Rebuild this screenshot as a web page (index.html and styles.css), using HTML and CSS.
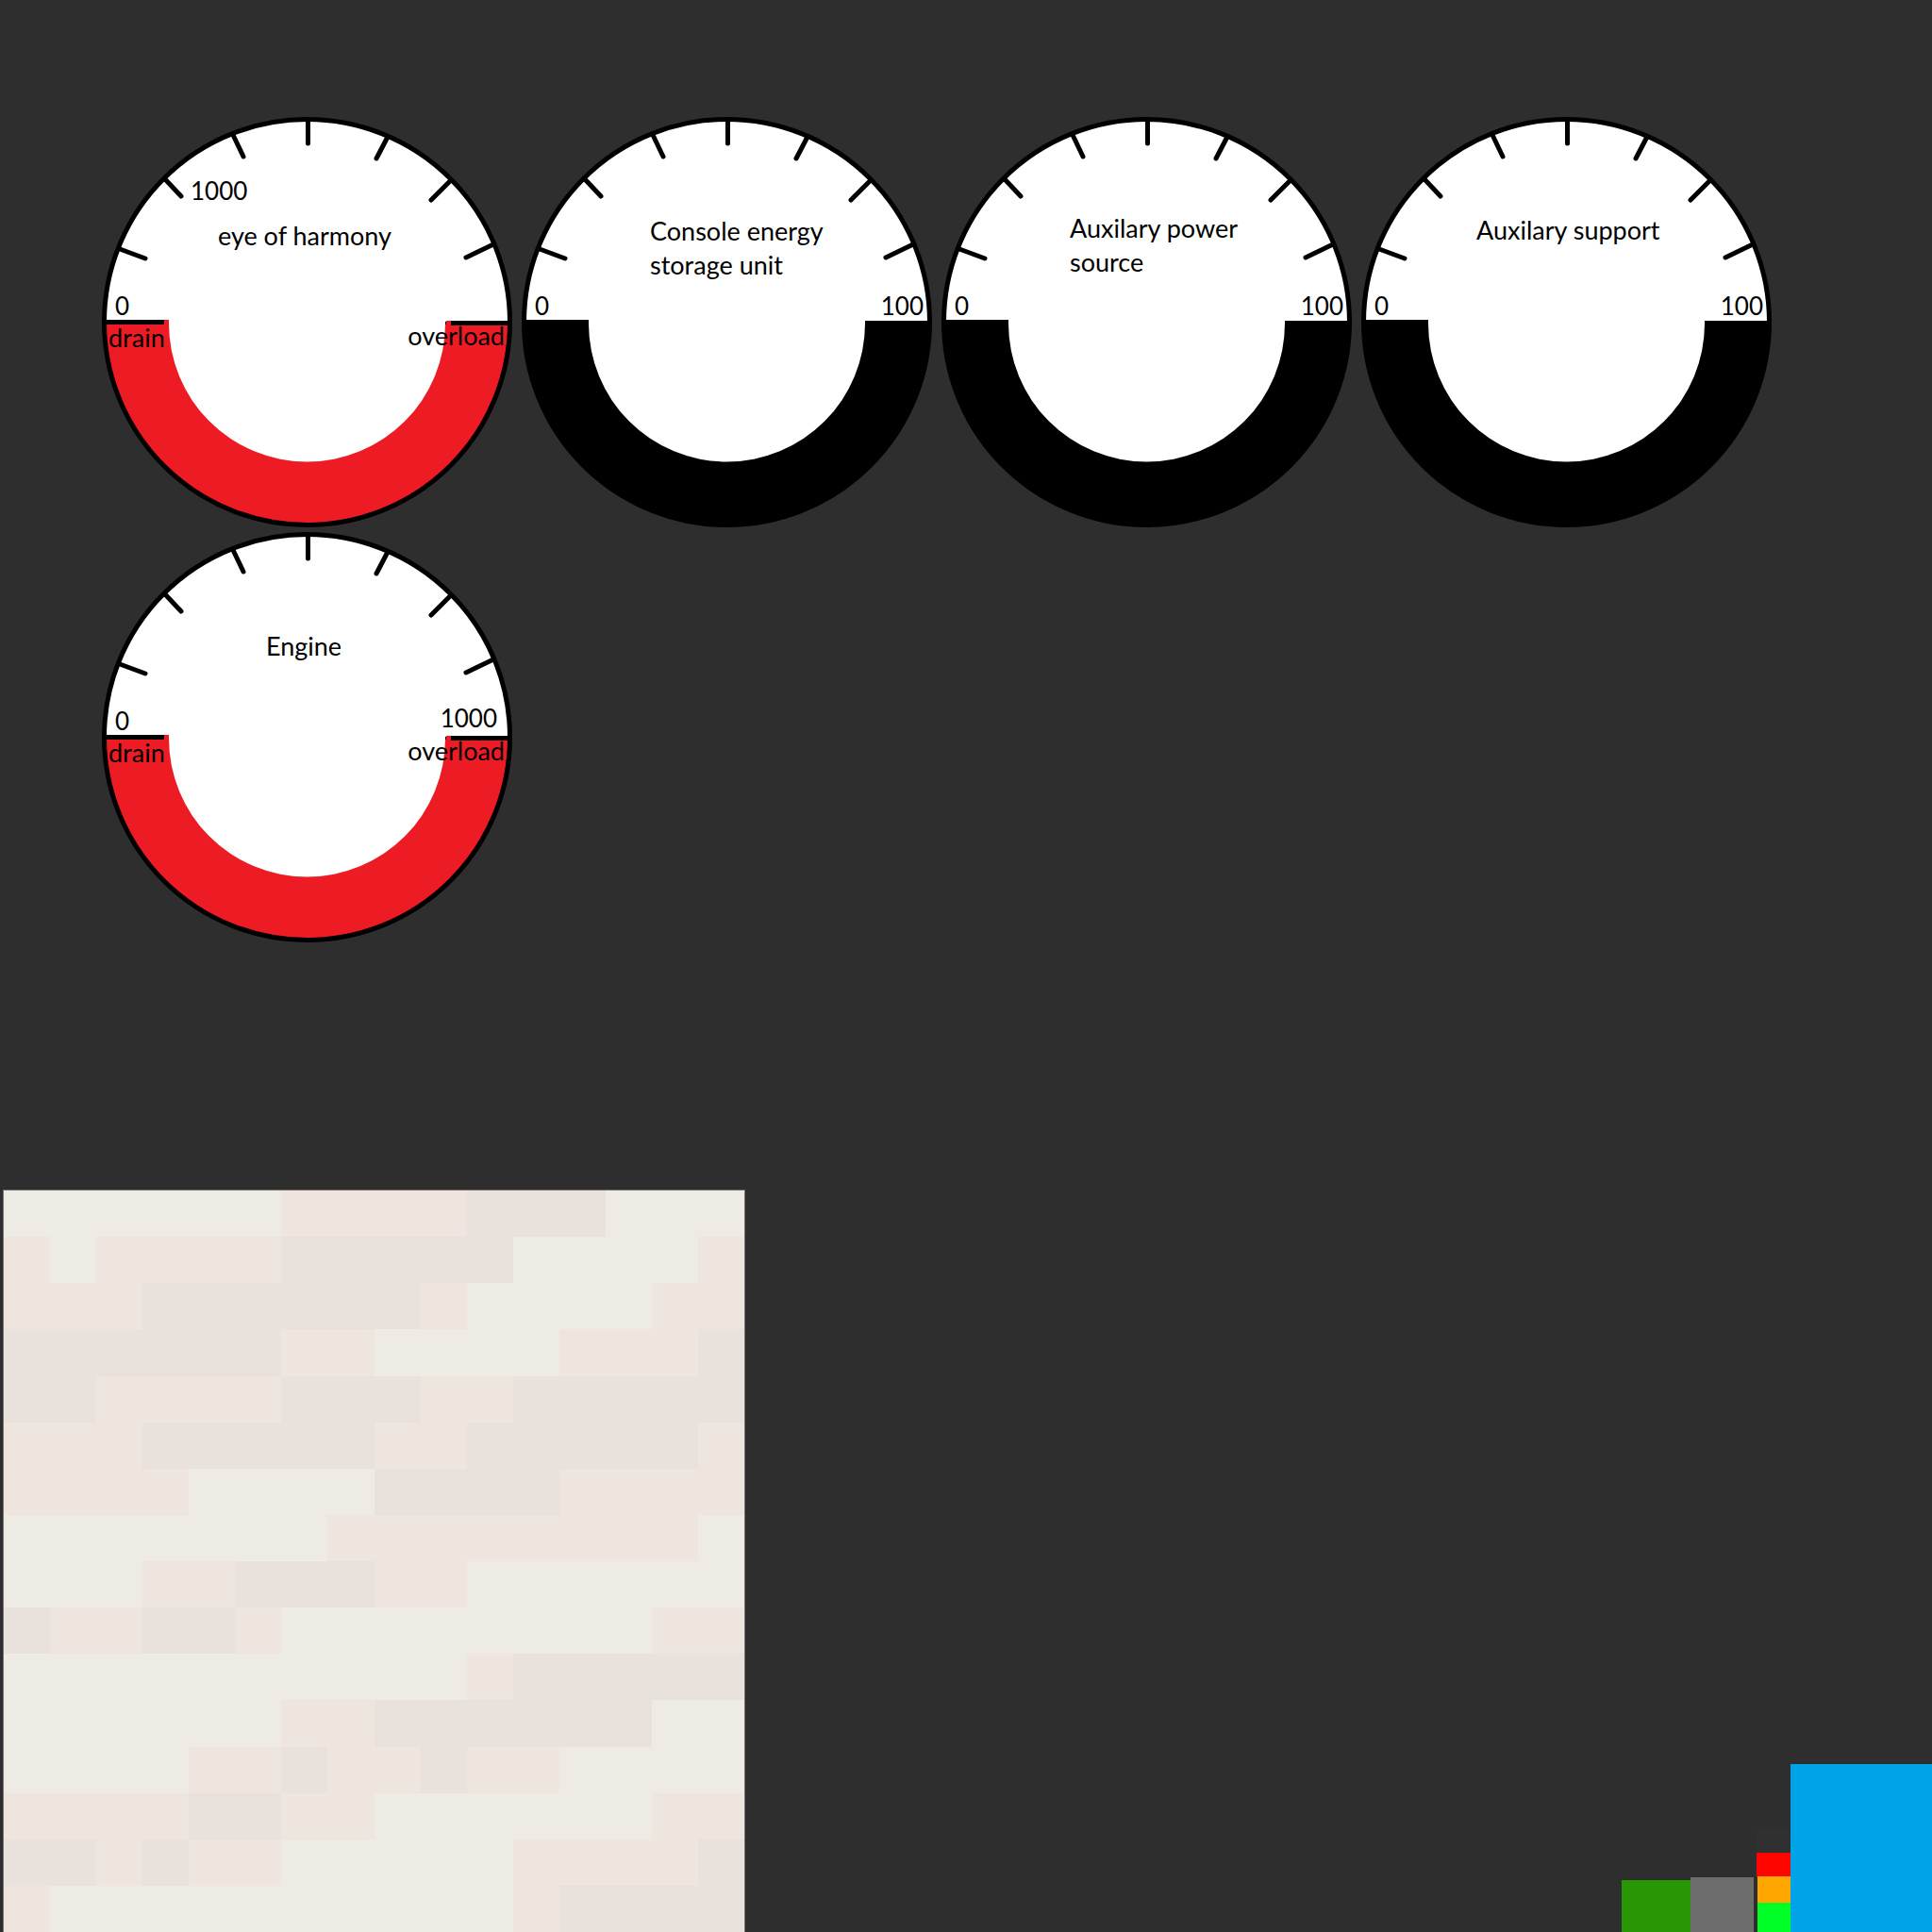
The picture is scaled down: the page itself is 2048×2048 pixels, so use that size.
FILE: index.html
```html
<!DOCTYPE html>
<html lang="en">
<head>
<meta charset="utf-8">
<title>Power gauges</title>
<link rel="stylesheet" href="styles.css">
</head>
<body>
<svg class="defs" aria-hidden="true">
  <symbol id="ticks" viewBox="0 0 435 435">
    <path d="M19 140L46 150M67 66L84 84M139 19L150 42M218.500 3V28M303 21L291 44M370 67L349 88M415 135L386 149"/>
  </symbol>
  <symbol id="dial-red" viewBox="0 0 435 435">
    <circle cx="217.500" cy="217.500" r="216" fill="#fff"/>
    <path fill="#ed1c24" d="M2 215H71V219A146.500 146.500 0 0 0 364 219L365 216H433A215 215 0 0 1 2 215Z"/>
    <path fill="#000" d="M2 215H66V220H2ZM370 216H433V221H370ZM364 217H365V220H364Z"/>
    <circle cx="217.500" cy="217.500" r="215" fill="none" stroke="#000" stroke-width="5"/>
    <use href="#ticks"/>
  </symbol>
  <symbol id="dial-black" viewBox="0 0 435 435">
    <circle cx="217.500" cy="217.500" r="216" fill="#fff"/>
    <path fill="#000" d="M2 215H71V219A146.500 146.500 0 0 0 364 219V216H433A215 215 0 0 1 2 215Z"/>
    <circle cx="217.500" cy="217.500" r="215" fill="none" stroke="#000" stroke-width="5"/>
    <use href="#ticks"/>
  </symbol>
</svg>

<main class="gauges">
  <svg class="gauge" viewBox="0 0 435 435" role="img" aria-label="eye of harmony">
    <use href="#dial-red"/>
    <text class="value" x="94" y="88">1000</text>
    <text x="123" y="136">eye of harmony</text>
    <text class="value" x="14" y="210">0</text>
    <text x="7" y="244">drain</text>
    <text class="end" x="427" y="242">overload</text>
  </svg>
  <svg class="gauge" viewBox="0 0 435 435" role="img" aria-label="Console energy storage unit">
    <use href="#dial-black"/>
    <text x="136" y="131">Console energy</text>
    <text x="136" y="167">storage unit</text>
    <text class="value" x="14" y="210">0</text>
    <text class="value end" x="426" y="210">100</text>
  </svg>
  <svg class="gauge" viewBox="0 0 435 435" role="img" aria-label="Auxilary power source">
    <use href="#dial-black"/>
    <text x="136" y="128">Auxilary power</text>
    <text x="136" y="164">source</text>
    <text class="value" x="14" y="210">0</text>
    <text class="value end" x="426" y="210">100</text>
  </svg>
  <svg class="gauge" viewBox="0 0 435 435" role="img" aria-label="Auxilary support">
    <use href="#dial-black"/>
    <text x="122" y="130">Auxilary support</text>
    <text class="value" x="14" y="210">0</text>
    <text class="value end" x="426" y="210">100</text>
  </svg>
  <svg class="gauge" viewBox="0 0 435 435" role="img" aria-label="Engine">
    <use href="#dial-red"/>
    <text x="174" y="131">Engine</text>
    <text class="value" x="14" y="210">0</text>
    <text class="value end" x="419" y="207">1000</text>
    <text x="7" y="244">drain</text>
    <text class="end" x="427" y="242">overload</text>
  </svg>
</main>

<footer class="materials">
  <svg class="texture" viewBox="0 0 16 16" preserveAspectRatio="none" aria-hidden="true">
    <path class="rose" d="M6 0h4v1h-4zM0 1h1v1h-1zM2 1h4v1h-4zM15 1h1v1h-1zM0 2h3v1h-3zM9 2h1v1h-1zM14 2h2v1h-2zM6 3h2v1h-2zM12 3h3v1h-3zM2 4h4v1h-4zM9 4h2v1h-2zM0 5h3v1h-3zM8 5h2v1h-2zM15 5h1v1h-1zM0 6h4v1h-4zM12 6h4v1h-4zM7 7h8v1h-8zM3 8h2v1h-2zM8 8h2v1h-2zM1 9h2v1h-2zM5 9h1v1h-1zM14 9h2v1h-2zM10 10h1v1h-1zM6 11h2v1h-2zM4 12h2v1h-2zM7 12h2v1h-2zM10 12h2v1h-2zM0 13h4v1h-4zM6 13h2v1h-2zM14 13h2v1h-2zM2 14h1v1h-1zM4 14h2v1h-2zM11 14h4v1h-4zM0 15h1v1h-1zM11 15h1v1h-1z"/>
    <path class="taupe" d="M10 0h3v1h-3zM6 1h5v1h-5zM3 2h6v1h-6zM0 3h6v1h-6zM15 3h1v1h-1zM0 4h2v1h-2zM6 4h3v1h-3zM11 4h5v1h-5zM3 5h5v1h-5zM10 5h5v1h-5zM8 6h4v1h-4zM5 8h3v1h-3zM0 9h1v1h-1zM3 9h2v1h-2zM11 10h5v1h-5zM8 11h6v1h-6zM6 12h1v1h-1zM9 12h1v1h-1zM4 13h2v1h-2zM0 14h2v1h-2zM3 14h1v1h-1zM15 14h1v1h-1zM12 15h4v1h-4z"/>
  </svg>
  <div class="swatches">
    <div class="swatch leaf"></div>
    <div class="swatch grey"></div>
    <div class="lamps">
      <div class="lamp off"></div>
      <div class="lamp red"></div>
      <div class="lamp orange"></div>
      <div class="lamp green"></div>
    </div>
    <div class="swatch blue"></div>
  </div>
</footer>
</body>
</html>
```
FILE: styles.css
```css
* {
  box-sizing: border-box;
}

body {
  margin: 0;
  min-height: 100vh;
  display: flex;
  flex-direction: column;
  background: #2e2e2e;
  color: #000;
  font-family: Lato, "Open Sans", sans-serif;
  font-size: 27px;
}

.defs {
  position: absolute;
  width: 0;
  height: 0;
}

.gauges {
  display: grid;
  grid-template-columns: repeat(auto-fill, 435px);
  gap: 5px 10px;
  padding: 124px 108px 48px;
}

.gauge {
  display: block;
  width: 435px;
  height: 435px;
}

#ticks path {
  fill: none;
  stroke: #000;
  stroke-width: 5px;
  stroke-linecap: round;
}

.value {
  font-size: 26px;
}

.end {
  text-anchor: end;
}

.materials {
  display: flex;
  justify-content: space-between;
  align-items: flex-end;
  margin-top: auto;
  padding-left: 3px;
}

.texture {
  width: 787px;
  height: 787px;
  border: 1px solid #77716f;
  border-bottom: 0;
  background: #eeebe5;
  shape-rendering: crispEdges;
}

.rose {
  fill: #eee5df;
}

.taupe {
  fill: #e9e1db;
}

.swatches {
  display: flex;
  align-items: flex-end;
}

.leaf {
  width: 73px;
  height: 55px;
  background: #289605;
}

.grey {
  width: 67px;
  height: 58px;
  margin-right: 3px;
  background: #6d6d6d;
}

.lamps {
  display: flex;
  flex-direction: column;
  align-items: flex-end;
}

.lamp {
  width: 35px;
}

.off {
  width: 36px;
  height: 26px;
  background: #303030;
}

.red {
  width: 36px;
  height: 25px;
  background: #ff0500;
}

.orange {
  height: 28px;
  background: #ffa600;
}

.green {
  height: 31px;
  background: #00ff26;
}

.blue {
  width: 150px;
  height: 178px;
  background: #00a2e8;
}
```
